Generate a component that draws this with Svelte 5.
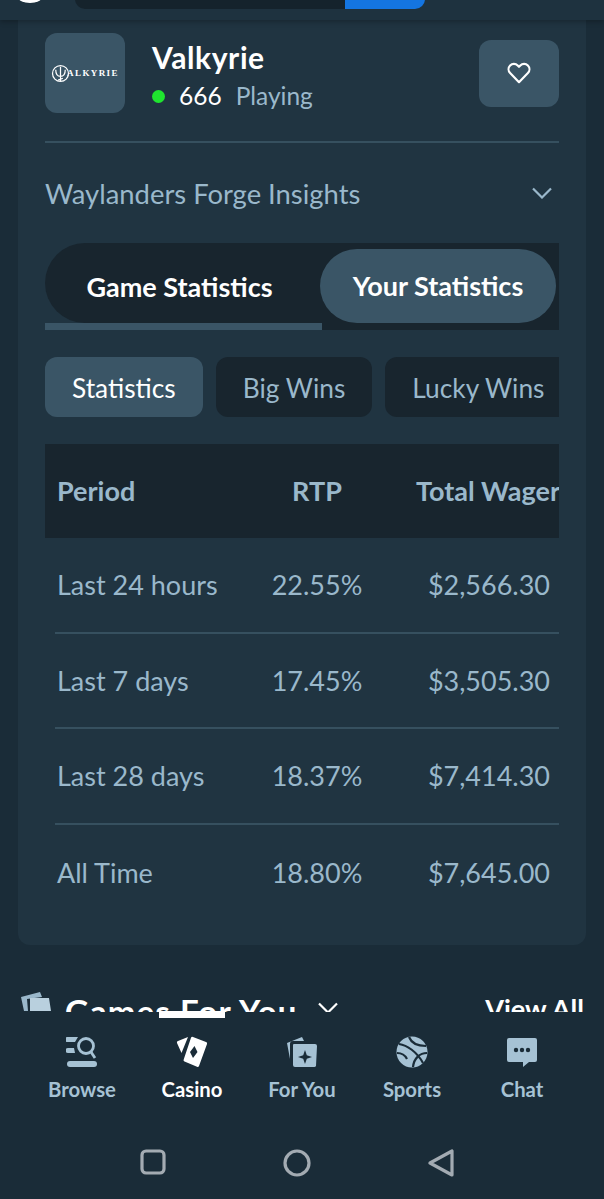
<script>
  const filters = ['Statistics', 'Big Wins', 'Lucky Wins']

  const rows = [
    { period: 'Last 24 hours', rtp: '22.55%', wager: '$2,566.30' },
    { period: 'Last 7 days', rtp: '17.45%', wager: '$3,505.30' },
    { period: 'Last 28 days', rtp: '18.37%', wager: '$7,414.30' },
    { period: 'All Time', rtp: '18.80%', wager: '$7,645.00' }
  ]
</script>

<div class="screen">
  <header>
    <div class="brand"></div>
    <div class="wallet">
      <div class="balance"></div>
      <div class="deposit"></div>
    </div>
  </header>

  <main>
    <section class="card">
      <div class="game">
        <div class="thumb">
          <svg class="crest" viewBox="0 0 20 20" fill="none" stroke="#fff" stroke-width="1.300">
            <circle cx="10" cy="10" r="8.400" />
            <path d="M10 3v15M5 6c0 5 2 7 5 7s5-2 5-7M7.500 17l5-2" />
          </svg>
          <span>ALKYRIE</span>
        </div>
        <div class="meta">
          <h1>Valkyrie</h1>
          <div class="players">
            <i class="dot"></i>
            <span class="count">666</span>
            <span class="playing">Playing</span>
          </div>
        </div>
        <button class="fav" aria-label="Favourite">
          <svg viewBox="0 0 24 24" width="26" height="26" fill="none" stroke="#fff" stroke-width="2" stroke-linejoin="round">
            <path d="M12 20.500 3.800 12a5 5 0 0 1 0-7 4.900 4.900 0 0 1 7 0L12 6.300l1.200-1.300a4.900 4.900 0 0 1 7 0 5 5 0 0 1 0 7z" />
          </svg>
        </button>
      </div>

      <div class="insights">
        <span>Waylanders Forge Insights</span>
        <svg viewBox="0 0 22 12" width="22" height="12" fill="none" stroke="#9ab8cb" stroke-width="2.200">
          <path d="M2 1.500 11 10.500 20 1.500" />
        </svg>
      </div>

      <div class="tabs">
        <div class="first">
          <div class="pill">Game Statistics</div>
          <div class="underline"></div>
        </div>
        <div class="second-wrap">
          <div class="second">Your Statistics</div>
        </div>
      </div>

      <div class="filters">
        {#each filters as f, i}
          <div class="filter" class:on={i === 0}>{f}</div>
        {/each}
      </div>

      <div class="table">
        <div class="head">
          <span>Period</span>
          <span class="mid">RTP</span>
          <span class="total">Total Wager</span>
        </div>
        {#each rows as row}
          <div class="row">
            <span>{row.period}</span>
            <span class="mid">{row.rtp}</span>
            <span class="amount">{row.wager}</span>
          </div>
        {/each}
      </div>
    </section>

    <div class="next">
      <svg class="deck" viewBox="0 0 32 20" width="32" height="20">
        <path d="M1 6 20 1l2 5-15 2 1 12H4z" fill="#9ab8cb" />
        <path d="M10 7h19l2 13H10z" fill="#b9d0de" />
      </svg>
      <h2>Games For You</h2>
      <svg class="down" viewBox="0 0 22 12" width="22" height="12" fill="none" stroke="#fff" stroke-width="2.200">
        <path d="M2 1.500 11 10.500 20 1.500" />
      </svg>
      <span class="all">View All</span>
    </div>
  </main>

  <nav>
    <i class="marker"></i>
    <div class="item">
      <svg viewBox="0 0 32 32" width="32" height="32" fill="#a6c2d4">
        <path d="M1 1h11l-3 5H2a2.500 2.500 0 0 1-1-5zM2 12h6l1 5H2a2.500 2.500 0 0 1 0-5z" />
        <circle cx="20" cy="10" r="7.500" fill="none" stroke="#a6c2d4" stroke-width="2.800" />
        <path d="m25 16 4 6" stroke="#a6c2d4" stroke-width="2.800" fill="none" />
        <rect x="1" y="25" width="30" height="6" rx="3" />
      </svg>
      <span>Browse</span>
    </div>
    <div class="item active">
      <svg viewBox="0 0 32 32" width="32" height="32" fill="#fff">
        <path d="M12 1 2 5a1.500 1.500 0 0 0-1 2l4.500 10z" />
        <path fill-rule="evenodd" d="M17 1 30 6a1.500 1.500 0 0 1 1 2L23 30a1.500 1.500 0 0 1-2 .8L8.500 25.500a1.500 1.500 0 0 1-.8-2L15 1.800a1.500 1.500 0 0 1 2-.8zM18.500 10l-4.500 6 3 6 4.500-6z" />
      </svg>
      <span>Casino</span>
    </div>
    <div class="item">
      <svg viewBox="0 0 32 32" width="32" height="32" fill="#a6c2d4">
        <path d="M1 7 16 1l2 4H7a3 3 0 0 0-3 3v15z" />
        <path fill-rule="evenodd" d="M8 8h21a2 2 0 0 1 2 2l-1 20a2 2 0 0 1-2 1H9a2 2 0 0 1-2-2V9a1 1 0 0 1 1-1zm11 6-1.800 5.200L12 21l5.200 1.800L19 28l1.800-5.200L26 21l-5.200-1.800z" />
      </svg>
      <span>For You</span>
    </div>
    <div class="item">
      <svg viewBox="0 0 32 32" width="32" height="32">
        <circle cx="16" cy="16" r="15.500" fill="#a6c2d4" />
        <g fill="none" stroke="#1a2c38" stroke-width="2.200">
          <path d="M3 8c8 1 18 8 24 19" />
          <path d="M13 1c2 5 7 9 17 9" />
          <path d="M31 17c-7 0-13 5-14 14" />
          <path d="M1 17c4 0 8 2 10 6" />
        </g>
      </svg>
      <span>Sports</span>
    </div>
    <div class="item">
      <svg viewBox="0 0 32 32" width="32" height="32">
        <path d="M3 2h26a2 2 0 0 1 2 2v20a2 2 0 0 1-2 2h-6l-6 5v-5H3a2 2 0 0 1-2-2V4a2 2 0 0 1 2-2z" fill="#a6c2d4" />
        <circle cx="10" cy="14" r="2.200" fill="#1a2c38" />
        <circle cx="16" cy="14" r="2.200" fill="#1a2c38" />
        <circle cx="22" cy="14" r="2.200" fill="#1a2c38" />
      </svg>
      <span>Chat</span>
    </div>
  </nav>

  <footer>
    <svg viewBox="0 0 26 26" width="26" height="26" fill="none" stroke="#a3abb2" stroke-width="3.200">
      <rect x="2" y="2" width="22" height="22" rx="4" />
    </svg>
    <svg viewBox="0 0 28 28" width="28" height="28" fill="none" stroke="#a3abb2" stroke-width="3.200">
      <circle cx="14" cy="14" r="12" />
    </svg>
    <svg viewBox="0 0 26 28" width="26" height="28" fill="none" stroke="#a3abb2" stroke-width="3.200" stroke-linejoin="round">
      <path d="M24 2v24L2 14z" />
    </svg>
  </footer>
</div>

<style>
  :global(body) {
    margin: 0;
    background: #1a2c38;
  }

  .screen {
    width: 604px;
    height: 1199px;
    display: flex;
    flex-direction: column;
    overflow: hidden;
    background: #1a2c38;
    font-family: Lato, "Open Sans", sans-serif;
    color: #9ab8cb;
  }

  header {
    height: 20px;
    flex: none;
    position: relative;
    z-index: 2;
    background: #1e323f;
    box-shadow: 0 2px 5px rgba(0, 0, 0, 0.25);
  }

  .brand {
    position: absolute;
    left: 18px;
    top: -9px;
    width: 24px;
    height: 12px;
    border-radius: 50%;
    background: #fff;
  }

  .wallet {
    position: absolute;
    left: 75px;
    top: -10px;
    width: 350px;
    height: 19px;
    display: flex;
    border-radius: 0 0 10px 10px;
    overflow: hidden;
  }

  .balance {
    flex: 1;
    background: #15232c;
  }

  .deposit {
    width: 80px;
    background: #1475e1;
  }

  main {
    height: 992px;
    flex: none;
    overflow: hidden;
  }

  .card {
    margin: 0 18px;
    height: 925px;
    box-sizing: border-box;
    padding: 13px 27px 0;
    background: #203441;
    border-radius: 0 0 12px 12px;
  }

  .game {
    display: flex;
    align-items: center;
    height: 80px;
    padding-bottom: 28px;
    border-bottom: 2px solid #36505f;
  }

  .thumb {
    width: 80px;
    height: 80px;
    flex: none;
    display: flex;
    align-items: center;
    justify-content: center;
    background: #3a5566;
    border-radius: 12px;
    color: #fff;
    font-family: "Liberation Serif", serif;
    font-size: 9px;
    font-weight: 700;
    letter-spacing: 1.400px;
  }

  .crest {
    width: 19px;
    height: 19px;
    margin-right: -3px;
  }

  .meta {
    margin-left: 27px;
    padding-top: 5px;
    flex: 1;
  }

  h1 {
    margin: 0 0 9px;
    color: #fff;
    font-size: 30px;
    letter-spacing: 0.600px;
    line-height: 32px;
    font-weight: 700;
  }

  .players {
    display: flex;
    align-items: center;
    font-size: 24.500px;
    line-height: 28px;
  }

  .dot {
    width: 13px;
    height: 13px;
    border-radius: 50%;
    background: #1fe52f;
    margin-right: 14px;
  }

  .count {
    color: #fff;
    margin-right: 14px;
  }

  .fav {
    width: 80px;
    height: 67px;
    flex: none;
    padding: 0;
    border: 0;
    border-radius: 12px;
    background: #3a5566;
    display: flex;
    align-items: center;
    justify-content: center;
  }

  .insights {
    height: 100px;
    display: flex;
    align-items: center;
    justify-content: space-between;
    padding-right: 6px;
    font-size: 27.400px;
  }

  .tabs {
    height: 87px;
    display: flex;
    color: #fff;
    font-size: 27px;
    font-weight: 700;
  }

  .first {
    width: 277px;
    flex: none;
    display: flex;
    flex-direction: column;
  }

  .pill {
    flex: 1;
    display: flex;
    align-items: center;
    justify-content: center;
    padding: 6px 8px 0 0;
    background: #18252e;
    border-radius: 40px 0 0 40px;
  }

  .underline {
    height: 7px;
    background: #3a5566;
  }

  .second-wrap {
    flex: 1;
    background: #18252e;
  }

  .second {
    width: 236px;
    height: 74px;
    box-sizing: border-box;
    padding-bottom: 2px;
    margin: 6px 0 0 -2px;
    display: flex;
    align-items: center;
    justify-content: center;
    border-radius: 37px;
    background: #3a5566;
  }

  .filters {
    display: flex;
    gap: 13px;
    margin-top: 27px;
    overflow: hidden;
  }

  .filter {
    height: 60px;
    box-sizing: border-box;
    padding: 1px 27px 0;
    flex: none;
    display: flex;
    align-items: center;
    border-radius: 12px;
    background: #18252e;
    font-size: 26.300px;
  }

  .filter.on {
    background: #3a5566;
    color: #fff;
  }

  .table {
    margin-top: 27px;
    overflow: hidden;
    font-size: 27px;
  }

  .head,
  .row {
    display: grid;
    grid-template-columns: 188px 144px 1fr;
    align-items: center;
  }

  .head {
    height: 94px;
    box-sizing: border-box;
    padding: 0 0 2px 12px;
    background: #18252e;
    font-weight: 700;
    white-space: nowrap;
  }

  .row {
    height: 95.500px;
    margin-left: 10px;
    padding-left: 2px;
    border-bottom: 2px solid #36505f;
    box-sizing: border-box;
  }

  .row:last-child {
    border-bottom: 0;
  }

  .mid {
    text-align: center;
  }

  .total {
    padding-left: 27px;
  }

  .amount {
    text-align: right;
    padding-right: 9px;
  }

  .next {
    margin: 46px 20px 0;
    display: flex;
    align-items: center;
    height: 40px;
    color: #fff;
  }

  .deck {
    margin-bottom: 20px;
  }

  h2 {
    margin: 0 0 0 13px;
    font-size: 33px;
    letter-spacing: 1.100px;
    font-weight: 700;
  }

  .down {
    margin: 0 0 6px 20px;
  }

  .all {
    margin: 0 0 6px auto;
    font-size: 27px;
    font-weight: 700;
  }

  nav {
    height: 128px;
    flex: none;
    display: flex;
    position: relative;
    z-index: 1;
    padding-left: 27px;
    background: #1a2c38;
  }

  .marker {
    position: absolute;
    left: 159px;
    top: -1px;
    width: 66px;
    height: 7px;
    background: #fff;
  }

  .item {
    width: 110px;
    padding-top: 24px;
    display: flex;
    flex-direction: column;
    align-items: center;
    color: #a6c2d4;
    font-size: 20.300px;
    font-weight: 700;
  }

  .item span {
    margin-top: 9px;
  }

  .item.active {
    color: #fff;
  }

  footer {
    flex: 1;
    display: flex;
    align-items: flex-start;
    justify-content: center;
    gap: 117px;
    padding: 9px 10px 0 0;
    background: #1a2c38;
  }
</style>
